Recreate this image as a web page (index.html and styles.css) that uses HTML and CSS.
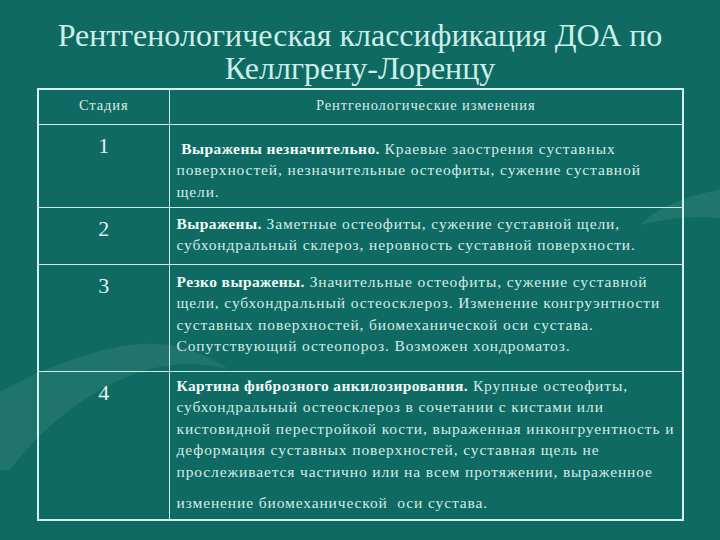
FILE: index.html
```html
<!DOCTYPE html>
<html lang="ru">
<head>
<meta charset="utf-8">
<link rel="stylesheet" href="styles.css">
</head>
<body>
<div class="slide">
  <svg class="swoosh" width="720" height="540" viewBox="0 0 720 540">
    <path d="M0 392 C 40 370, 90 350, 130 345 C 170 340, 200 350, 230 370 C 195 360, 160 362, 120 380 C 80 398, 40 430, 10 470 L 0 470 Z" fill="#ffffff" opacity="0.07"/>
    <path d="M720 190 C 690 195, 660 205, 640 225 C 660 220, 690 215, 720 218 Z" fill="#ffffff" opacity="0.08"/>
  </svg>
  <h1 class="title">Рентгенологическая классификация ДОА по<br>Келлгрену-Лоренцу</h1>
  <table class="grid">
    <colgroup>
      <col class="c1">
      <col class="c2">
    </colgroup>
    <tr class="head">
      <th>Стадия</th>
      <th>Рентгенологические изменения</th>
    </tr>
    <tr class="r1">
      <td class="num">1</td>
      <td class="txt">&nbsp;<b>Выражены незначительно.</b> Краевые заострения суставных<br>поверхностей, незначительные остеофиты, сужение суставной<br>щели.</td>
    </tr>
    <tr class="r2">
      <td class="num">2</td>
      <td class="txt"><b>Выражены.</b> Заметные остеофиты, сужение суставной щели,<br>субхондральный склероз, неровность суставной поверхности.</td>
    </tr>
    <tr class="r3">
      <td class="num">3</td>
      <td class="txt"><b>Резко выражены.</b> Значительные остеофиты, сужение суставной<br>щели, субхондральный остеосклероз. Изменение конгруэнтности<br>суставных поверхностей, биомеханической оси сустава.<br>Сопутствующий остеопороз. Возможен хондроматоз.</td>
    </tr>
    <tr class="r4">
      <td class="num">4</td>
      <td class="txt"><b>Картина фиброзного анкилозирования.</b> Крупные остеофиты,<br>субхондральный остеосклероз в сочетании с кистами или<br>кистовидной перестройкой кости, выраженная инконгруентность и<br>деформация суставных поверхностей, суставная щель не<br>прослеживается частично или на всем протяжении, выраженное <span class="last">изменение биомеханической&nbsp; оси сустава.</span></td>
    </tr>
  </table>
</div>
</body>
</html>
```

FILE: styles.css
```css
html, body {
  margin: 0;
  padding: 0;
}
body {
  width: 720px;
  height: 540px;
  background: #0e6a63;
  overflow: hidden;
}
.slide {
  position: relative;
  width: 720px;
  height: 540px;
  padding-top: 19px;
  box-sizing: border-box;
  font-family: "Liberation Serif", "Times New Roman", serif;
  color: #dcefeb;
}
.swoosh {
  position: absolute;
  left: 0;
  top: 0;
  pointer-events: none;
}
.title {
  position: relative;
  margin: 0;
  font-family: "Liberation Serif", "Times New Roman", serif;
  font-weight: normal;
  font-size: 32px;
  line-height: 33px;
  text-align: center;
  color: #cdeee7;
}
.grid {
  position: relative;
  margin: 3px 0 0 37px;
  width: 647px;
  table-layout: fixed;
  border-collapse: collapse;
  border: 2px solid #d4f0ea;
  font-family: "Liberation Serif", "Times New Roman", serif;
}
.grid th, .grid td {
  border: 1px solid #cdebe5;
  vertical-align: top;
  padding: 0;
}
.grid .c1 { width: 131px; }
.grid .head th {
  font-weight: normal;
  font-size: 14.5px;
  letter-spacing: 0.9px;
  line-height: 30px;
  color: #d9ece8;
}
.grid .num {
  text-align: center;
  font-size: 22px;
  line-height: 24px;
  padding-top: 9px;
  color: #e2f2ef;
}
.grid .txt {
  font-size: 15.5px;
  letter-spacing: 0.88px;
  line-height: 21.5px;
  padding: 0 2px 0 7px;
  color: #d6ebe7;
  white-space: nowrap;
  overflow: hidden;
}
.grid .txt b {
  color: #f2faf8;
  letter-spacing: 0.4px;
}
.head { height: 35px; }
.r1 { height: 83px; }
.r2 { height: 57px; }
.r3 { height: 107px; }
.r4 { height: 149px; }
.grid .r1 .txt { padding-top: 13px; }
.grid .r2 .txt { padding-top: 5px; }
.grid .r3 .txt { padding-top: 6px; }
.grid .r4 .txt { padding-top: 3px; }
.last {
  display: block;
  margin-top: 10px;
}
```
